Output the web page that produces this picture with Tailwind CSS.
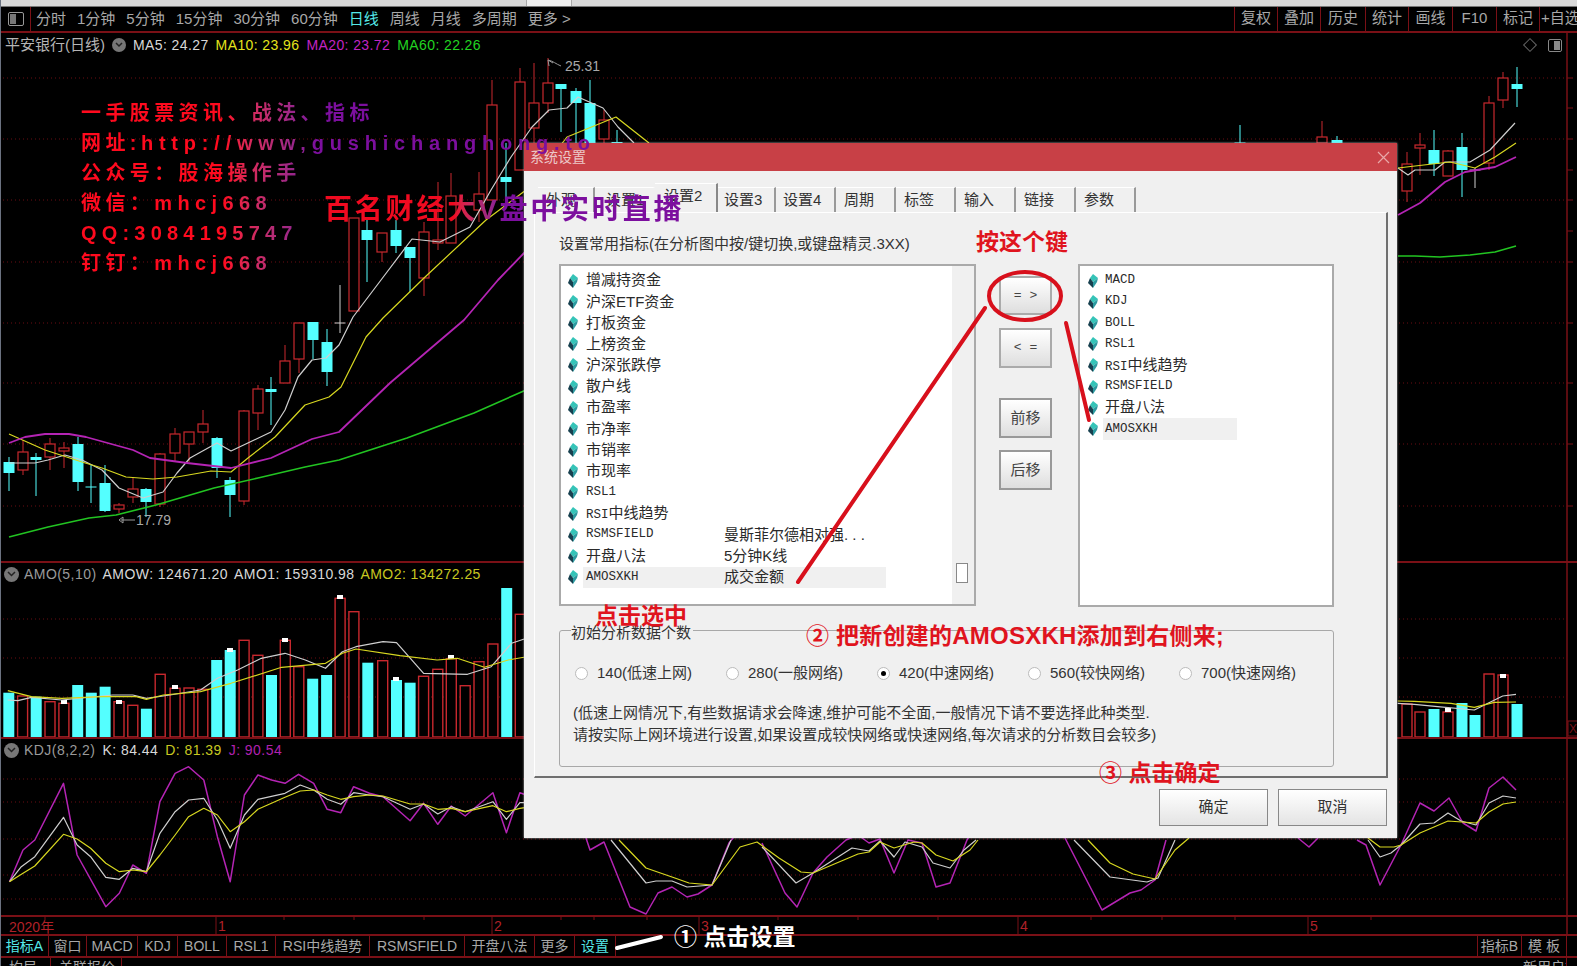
<!DOCTYPE html>
<html>
<head>
    <meta charset="utf-8">
    <script src="https://cdn.jsdelivr.net/npm/@tailwindcss/browser@4"></script>
</head>
<body class="bg-black font-['Liberation_Sans','Noto_Sans_CJK_SC',sans-serif]">
<svg width="0" height="0" class="absolute">
    <symbol id="gem" viewBox="0 0 10 14">
        <polygon points="5,0 10,4 5,8 2,4" fill="#35c4b8"/>
        <polygon points="2,4 5,8 5,14 0,9" fill="#17404f"/>
        <polygon points="5,8 10,4 9,8 5,14" fill="#2c9aa0"/>
    </symbol>
</svg>

<div class="relative w-[1577px] h-[966px] overflow-hidden bg-black text-[#a8a8a8] border-l border-[#6b7280]">
    <!-- Top strip + toolbar -->
    <div class="h-[7px] bg-[#d9d9d9] border-b border-[#777]">
        <div class="ml-[525px] w-[46px] h-[6px] bg-[#efefef] border-x border-[#aaa]"></div>
    </div>
    <div class="h-[26px] flex items-center border-b-2 border-[#7a1016] text-[15px]">
        <div class="w-[30px] h-full flex items-center justify-center border-r border-[#7a1016]">
            <div class="w-[16px] h-[14px] border border-[#999] rounded-[2px] flex justify-start p-[1px]"><div class="w-[6px] h-full bg-[#777]"></div></div>
        </div>
        <div class="flex gap-[11px] pl-[5px]">
            <span>分时</span><span>1分钟</span><span>5分钟</span><span>15分钟</span><span>30分钟</span><span>60分钟</span>
            <span class="text-[#55e8e8]">日线</span><span>周线</span><span>月线</span><span>多周期</span><span>更多 &gt;</span>
        </div>
        <div class="ml-auto flex h-full">
            <span class="w-[43px] text-center border-l border-[#7a1016]">复权</span>
            <span class="w-[43px] text-center border-l border-[#7a1016]">叠加</span>
            <span class="w-[45px] text-center border-l border-[#7a1016]">历史</span>
            <span class="w-[43px] text-center border-l border-[#7a1016]">统计</span>
            <span class="w-[44px] text-center border-l border-[#7a1016]">画线</span>
            <span class="w-[44px] text-center border-l border-[#7a1016]">F10</span>
            <span class="w-[43px] text-center border-l border-[#7a1016]">标记</span>
            <span class="w-[38px] whitespace-nowrap overflow-hidden border-l border-[#7a1016] pl-[1px]">+自选</span>
        </div>
    </div>

    <!-- Price pane -->
    <div class="relative h-[530px] border-b-2 border-[#7a1016]">
        <svg id="pane-price" class="absolute inset-0" width="1577" height="528" viewBox="0 33 1577 528"></svg>
        <div class="relative h-[24px] flex items-center pl-[4px] text-[14px] tracking-[0.4px] gap-[7px]">
            <span class="text-[15px] tracking-normal text-[#b5b5b5]">平安银行(日线)</span>
            <span class="w-[14px] h-[14px] rounded-full bg-[#777] flex items-center justify-center"><svg width="8" height="6" viewBox="0 0 8 6"><path d="M1 1l3 3 3-3" fill="none" stroke="#222" stroke-width="1.5"/></svg></span>
            <span class="text-[#d8d8d8]">MA5: 24.27</span>
            <span class="text-[#e4e41c]">MA10: 23.96</span>
            <span class="text-[#c224c2]">MA20: 23.72</span>
            <span class="text-[#22d422]">MA60: 22.26</span>
            <span class="absolute left-[1524px] top-[7px] w-[10px] h-[10px] border border-[#666] rotate-45"></span>
            <span class="absolute left-[1547px] top-[6px] w-[14px] h-[13px] border border-[#888] rounded-[2px] flex justify-end p-[1px]"><span class="w-[6px] bg-[#888]"></span></span>
        </div>
    </div>

    <!-- AMO pane -->
    <div class="relative h-[176px] border-b-2 border-[#7a1016]">
        <svg id="pane-amo" class="absolute inset-0" width="1577" height="174" viewBox="0 563 1577 174"></svg>
        <div class="relative h-[22px] flex items-center pl-[3px] text-[14px] tracking-[0.45px] gap-[6px]">
            <span class="w-[15px] h-[15px] rounded-full bg-[#777] flex items-center justify-center -mr-[1px]"><svg width="9" height="6" viewBox="0 0 9 6"><path d="M1 1l3.5 3.5L8 1" fill="none" stroke="#222" stroke-width="1.5"/></svg></span>
            <span class="text-[#9a9a9a]">AMO(5,10)</span>
            <span class="text-[#d8d8d8]">AMOW: 124671.20</span>
            <span class="text-[#d8d8d8]">AMO1: 159310.98</span>
            <span class="text-[#c8c820]">AMO2: 134272.25</span>
        </div>
    </div>

    <!-- KDJ pane -->
    <div class="relative h-[178px] border-b-2 border-[#7a1016]">
        <svg id="pane-kdj" class="absolute inset-0" width="1577" height="176" viewBox="0 739 1577 176"></svg>
        <div class="relative h-[22px] flex items-center pl-[3px] text-[14px] tracking-[0.45px] gap-[7px]">
            <span class="w-[15px] h-[15px] rounded-full bg-[#777] flex items-center justify-center -mr-[2px]"><svg width="9" height="6" viewBox="0 0 9 6"><path d="M1 1l3.5 3.5L8 1" fill="none" stroke="#222" stroke-width="1.5"/></svg></span>
            <span class="text-[#9a9a9a]">KDJ(8,2,2)</span>
            <span class="text-[#d8d8d8]">K: 84.44</span>
            <span class="text-[#c8c820]">D: 81.39</span>
            <span class="text-[#b020b0]">J: 90.54</span>
        </div>
    </div>

    <!-- Date axis -->
    <div class="relative h-[19px] border-b-2 border-[#7a1016]">
        <svg id="pane-axis" class="absolute inset-0" width="1577" height="17" viewBox="0 917 1577 17"></svg>
    </div>

    <!-- Indicator tabs -->
    <div class="h-[22px] flex items-center text-[14px] border-b-2 border-[#7a1016]">
        <span class="w-[48px] text-center text-[#55e8e8] border-r border-[#7a1016]">指标A</span>
        <span class="w-[38px] text-center border-r border-[#7a1016]">窗口</span>
        <span class="w-[51px] text-center border-r border-[#7a1016]">MACD</span>
        <span class="w-[40px] text-center border-r border-[#7a1016]">KDJ</span>
        <span class="w-[49px] text-center border-r border-[#7a1016]">BOLL</span>
        <span class="w-[49px] text-center border-r border-[#7a1016]">RSL1</span>
        <span class="w-[94px] text-center border-r border-[#7a1016]">RSI中线趋势</span>
        <span class="w-[95px] text-center border-r border-[#7a1016]">RSMSFIELD</span>
        <span class="w-[70px] text-center border-r border-[#7a1016]">开盘八法</span>
        <span class="w-[40px] text-center border-r border-[#7a1016]">更多</span>
        <span class="w-[41px] text-center text-[#55e8e8] border-r border-[#7a1016]">设置</span>
        <span class="ml-auto w-[44px] text-center border-l border-[#7a1016]">指标B</span>
        <span class="w-[46px] text-center border-x border-[#7a1016] mr-[10px]">模 板</span>
    </div>
    <div class="h-[8px] flex text-[14px] leading-[18px] overflow-hidden">
        <span class="w-[50px] pl-[8px] border-r border-[#7a1016]">均局</span>
        <span class="w-[71px] pl-[8px] border-r border-[#7a1016]">关联报价</span>
        <span class="ml-auto w-[43px] whitespace-nowrap overflow-hidden">新用户福</span>
        <span class="w-[11px] border-l border-[#7a1016]"></span>
    </div>

    <!-- System settings dialog -->
    <div class="absolute left-[523px] top-[143px] w-[873px] h-[695px] bg-[#f0f0f0] text-[#333] text-[15px] shadow-[0_0_2px_#bbb]">
        <div class="h-[28px] bg-[#c84046] flex items-center justify-between pl-[6px] pr-[7px] text-[14px] text-[#ecc8c8]">
            <span>系统设置</span>
            <svg width="13" height="13" viewBox="0 0 13 13"><path d="M1 1l11 11M12 1L1 12" stroke="#e8a8a8" stroke-width="1.2"/></svg>
        </div>
        <div class="h-[41px] pl-[14px] flex items-end">
            <span class="w-[57px] h-[25px] leading-[24px] pl-[8px] border-r-2 border-t border-[#999] border-t-white">外观</span>
            <span class="w-[60px] h-[25px] leading-[24px] pl-[11px] border-r-2 border-t border-[#f0f0f0] border-t-white">设置1</span>
            <span class="w-[63px] h-[29px] leading-[24px] pl-[9px] border-r-2 border-t border-[#888] border-t-white">设置2</span>
            <span class="w-[58px] h-[25px] leading-[24px] pl-[6px] border-r-2 border-t border-[#999] border-t-white">设置3</span>
            <span class="w-[60px] h-[25px] leading-[24px] pl-[7px] border-r-2 border-t border-[#999] border-t-white">设置4</span>
            <span class="w-[60px] h-[25px] leading-[24px] pl-[8px] border-r-2 border-t border-[#999] border-t-white">周期</span>
            <span class="w-[60px] h-[25px] leading-[24px] pl-[8px] border-r-2 border-t border-[#999] border-t-white">标签</span>
            <span class="w-[60px] h-[25px] leading-[24px] pl-[8px] border-r-2 border-t border-[#999] border-t-white">输入</span>
            <span class="w-[60px] h-[25px] leading-[24px] pl-[8px] border-r-2 border-t border-[#999] border-t-white">链接</span>
            <span class="w-[60px] h-[25px] leading-[24px] pl-[8px] border-r-2 border-t border-[#999] border-t-white">参数</span>
        </div>
        <div class="ml-[10px] w-[854px] h-[566px] border-t border-l border-white border-r-2 border-b-2 border-r-[#6f6f6f] border-b-[#6f6f6f] pl-[24px]">
            <div class="h-[51px] pt-[20px] leading-[22px]">设置常用指标(在分析图中按/键切换,或键盘精灵.3XX)</div>
            <div class="flex items-start">
                <!-- Left list -->
                <div class="relative w-[417px] h-[342px] bg-white border-2 border-[#aaa] pt-[4px] pl-[7px] text-[#2a2a2a]">
                    <div class="h-[21.2px] flex items-center"><svg width="10" height="14"><use href="#gem"/></svg><span class="pl-[8px]">增减持资金</span></div>
                    <div class="h-[21.2px] flex items-center"><svg width="10" height="14"><use href="#gem"/></svg><span class="pl-[8px]">沪深ETF资金</span></div>
                    <div class="h-[21.2px] flex items-center"><svg width="10" height="14"><use href="#gem"/></svg><span class="pl-[8px]">打板资金</span></div>
                    <div class="h-[21.2px] flex items-center"><svg width="10" height="14"><use href="#gem"/></svg><span class="pl-[8px]">上榜资金</span></div>
                    <div class="h-[21.2px] flex items-center"><svg width="10" height="14"><use href="#gem"/></svg><span class="pl-[8px]">沪深张跌停</span></div>
                    <div class="h-[21.2px] flex items-center"><svg width="10" height="14"><use href="#gem"/></svg><span class="pl-[8px]">散户线</span></div>
                    <div class="h-[21.2px] flex items-center"><svg width="10" height="14"><use href="#gem"/></svg><span class="pl-[8px]">市盈率</span></div>
                    <div class="h-[21.2px] flex items-center"><svg width="10" height="14"><use href="#gem"/></svg><span class="pl-[8px]">市净率</span></div>
                    <div class="h-[21.2px] flex items-center"><svg width="10" height="14"><use href="#gem"/></svg><span class="pl-[8px]">市销率</span></div>
                    <div class="h-[21.2px] flex items-center"><svg width="10" height="14"><use href="#gem"/></svg><span class="pl-[8px]">市现率</span></div>
                    <div class="h-[21.2px] flex items-center"><svg width="10" height="14"><use href="#gem"/></svg><span class="pl-[8px] font-['Liberation_Mono','Noto_Sans_CJK_SC',monospace] text-[12.5px]">RSL1</span></div>
                    <div class="h-[21.2px] flex items-center"><svg width="10" height="14"><use href="#gem"/></svg><span class="pl-[8px]"><span class="font-['Liberation_Mono',monospace] text-[12.5px]">RSI</span>中线趋势</span></div>
                    <div class="h-[21.2px] flex items-center"><svg width="10" height="14"><use href="#gem"/></svg><span class="w-[146px] pl-[8px] font-['Liberation_Mono',monospace] text-[12.5px]">RSMSFIELD</span><span>曼斯菲尔德相对强. . .</span></div>
                    <div class="h-[21.2px] flex items-center"><svg width="10" height="14"><use href="#gem"/></svg><span class="w-[146px] pl-[8px]">开盘八法</span><span>5分钟K线</span></div>
                    <div class="h-[21.2px] flex items-center"><svg width="10" height="14"><use href="#gem"/></svg><span class="flex ml-[5px] w-[303px] h-full items-center bg-[#f0f0f0]"><span class="w-[141px] pl-[3px] font-['Liberation_Mono',monospace] text-[12.5px]">AMOSXKH</span><span>成交金额</span></span></div>
                    <div class="absolute right-0 top-0 bottom-0 w-[22px] bg-[#f0f0f0]">
                        <div class="absolute left-[4px] top-[297px] w-[12px] h-[20px] bg-white border border-[#888]"></div>
                    </div>
                </div>
                <!-- Move buttons -->
                <div class="w-[53px] ml-[23px] pt-[12px] flex flex-col">
                    <button class="h-[39px] rounded-[2px] border-2 border-[#aaa] bg-linear-to-b from-white to-[#dedede] text-[#444] font-['Liberation_Mono',monospace] text-[13px]">= &gt;</button>
                    <button class="h-[40px] mt-[13px] border-2 border-[#aaa] bg-linear-to-b from-white to-[#dedede] text-[#444] font-['Liberation_Mono',monospace] text-[13px]">&lt; =</button>
                    <button class="h-[40px] mt-[30px] border-2 border-[#999] bg-linear-to-b from-white to-[#dedede] text-[#444]">前移</button>
                    <button class="h-[40px] mt-[12px] border-2 border-[#999] bg-linear-to-b from-white to-[#dedede] text-[#444]">后移</button>
                </div>
                <!-- Right list -->
                <div class="w-[256px] h-[343px] ml-[26px] bg-white border-2 border-[#aaa] pt-[4px] pl-[8px] text-[#2a2a2a]">
                    <div class="h-[21.2px] flex items-center"><svg width="10" height="14"><use href="#gem"/></svg><span class="pl-[7px] font-['Liberation_Mono',monospace] text-[12.5px]">MACD</span></div>
                    <div class="h-[21.2px] flex items-center"><svg width="10" height="14"><use href="#gem"/></svg><span class="pl-[7px] font-['Liberation_Mono',monospace] text-[12.5px]">KDJ</span></div>
                    <div class="h-[21.2px] flex items-center"><svg width="10" height="14"><use href="#gem"/></svg><span class="pl-[7px] font-['Liberation_Mono',monospace] text-[12.5px]">BOLL</span></div>
                    <div class="h-[21.2px] flex items-center"><svg width="10" height="14"><use href="#gem"/></svg><span class="pl-[7px] font-['Liberation_Mono',monospace] text-[12.5px]">RSL1</span></div>
                    <div class="h-[21.2px] flex items-center"><svg width="10" height="14"><use href="#gem"/></svg><span class="pl-[7px]"><span class="font-['Liberation_Mono',monospace] text-[12.5px]">RSI</span>中线趋势</span></div>
                    <div class="h-[21.2px] flex items-center"><svg width="10" height="14"><use href="#gem"/></svg><span class="pl-[7px] font-['Liberation_Mono',monospace] text-[12.5px]">RSMSFIELD</span></div>
                    <div class="h-[21.2px] flex items-center"><svg width="10" height="14"><use href="#gem"/></svg><span class="pl-[7px]">开盘八法</span></div>
                    <div class="h-[21.2px] flex items-center"><svg width="10" height="14"><use href="#gem"/></svg><span class="flex ml-[5px] w-[134px] h-full items-center bg-[#f0f0f0] pl-[2px] font-['Liberation_Mono',monospace] text-[12.5px]">AMOSXKH</span></div>
                </div>
            </div>
            <!-- Data count group -->
            <div class="relative mt-[23px] w-[775px] h-[137px] border border-[#a8a8a8] rounded-[3px] pl-[15px] pt-[31px]">
                <span class="absolute left-[11px] top-[-6px] bg-[#f0f0f0] leading-[16px] pr-[2px]">初始分析数据个数</span>
                <div class="flex">
                    <label class="w-[151px] flex items-center gap-[9px]"><span class="w-[13px] h-[13px] rounded-full bg-white border border-[#bbb]"></span>140(低速上网)</label>
                    <label class="w-[151px] flex items-center gap-[9px]"><span class="w-[13px] h-[13px] rounded-full bg-white border border-[#bbb]"></span>280(一般网络)</label>
                    <label class="w-[151px] flex items-center gap-[9px]"><span class="w-[13px] h-[13px] rounded-full bg-white border border-[#bbb] flex items-center justify-center"><span class="w-[5px] h-[5px] rounded-full bg-black"></span></span>420(中速网络)</label>
                    <label class="w-[151px] flex items-center gap-[9px]"><span class="w-[13px] h-[13px] rounded-full bg-white border border-[#bbb]"></span>560(较快网络)</label>
                    <label class="w-[151px] flex items-center gap-[9px]"><span class="w-[13px] h-[13px] rounded-full bg-white border border-[#bbb]"></span>700(快速网络)</label>
                </div>
                <div class="mt-[17px] -ml-[2px] leading-[22px]">(低速上网情况下,有些数据请求会降速,维护可能不全面,一般情况下请不要选择此种类型.<br>请按实际上网环境进行设置,如果设置成较快网络或快速网络,每次请求的分析数目会较多)</div>
            </div>
        </div>
        <div class="mt-[11px] flex justify-end gap-[10px] pr-[10px]">
            <button class="w-[109px] h-[37px] border border-[#888] bg-linear-to-b from-white to-[#e4e4e4] text-[#333]">确定</button>
            <button class="w-[109px] h-[37px] border border-[#888] bg-linear-to-b from-white to-[#e4e4e4] text-[#333]">取消</button>
        </div>
    </div>

    <!-- Watermarks and tutorial notes, painted over the window -->
    <div class="absolute left-[80px] top-[98px] w-[510px] text-[20px] leading-[30px] tracking-[4.4px] font-bold whitespace-nowrap bg-linear-to-r from-[#ff0a1e] from-[28%] to-[#7c0f9e] to-[46%] bg-clip-text text-transparent">
        <div>一手股票资讯、战法、指标</div>
        <div>网址:<span class="tracking-[5.8px]">http://www,gushichanghong.top</span></div>
        <div>公众号：股海操作手</div>
        <div>微信：<span class="tracking-[5.4px]">mhcj668</span></div>
        <div><span class="tracking-[5.2px]">QQ:3084195747</span></div>
        <div>钉钉：<span class="tracking-[5.4px]">mhcj668</span></div>
    </div>
    <div class="absolute left-[323px] top-[192px] w-[360px] text-[28px] leading-[36px] tracking-[2.8px] font-bold whitespace-nowrap bg-linear-to-r from-[#f00a20] from-[36%] to-[#7c0f9e] to-[50%] bg-clip-text text-transparent">百名财经大V盘中实时直播</div>

    <svg class="absolute inset-0 pointer-events-none" width="1577" height="966" viewBox="0 0 1577 966">
        <ellipse cx="1024" cy="296" rx="36" ry="24" fill="none" stroke="#d8101c" stroke-width="4"/>
        <path d="M984 308L797 582" stroke="#d8101c" stroke-width="4" stroke-linecap="round"/>
        <path d="M1065 323L1088 420" stroke="#d8101c" stroke-width="4" stroke-linecap="round"/>
        <path d="M616 948L660 937" stroke="#fff" stroke-width="4" stroke-linecap="round"/>
    </svg>
    <span class="absolute left-[975px] top-[226px] text-[23px] leading-[32px] font-bold text-[#e0141e]">按这个键</span>
    <span class="absolute left-[594px] top-[600px] text-[23px] leading-[32px] font-bold text-[#e0141e]">点击选中</span>
    <span class="absolute left-[805px] top-[620px] text-[23px] leading-[32px] tracking-[0.25px] font-bold text-[#e0141e] whitespace-nowrap">② 把新创建的<span class="text-[24px]">AMOSXKH</span>添加到右侧来;</span>
    <span class="absolute left-[1098px] top-[757px] text-[23px] leading-[32px] font-bold text-[#e0141e] whitespace-nowrap">③ 点击确定</span>
    <span class="absolute left-[673px] top-[921px] text-[23px] leading-[32px] font-bold text-white whitespace-nowrap">① 点击设置</span>
</div>

<script>
const CYAN = '#54ffff', RED = '#c8282e', WHITE = '#cfcfcf', YELLOW = '#d8d820', PURPLE = '#b424b4', GREEN = '#22c422';
const GRID = '#6a0c12', FRAME = '#7a1016';

function poly(pts, color, w) {
    return `<polyline fill="none" stroke="${color}" stroke-width="${w || 1.2}" stroke-linejoin="round" points="${pts.map(p => p.join(',')).join(' ')}"/>`;
}
function grid(ys) {
    return ys.map(y => `<line x1="2" x2="1566" y1="${y}" y2="${y}" stroke="${GRID}" stroke-dasharray="1 3"/>`).join('');
}
function candle([x, kind, high, top, bot, low]) {
    const color = kind === 'c' ? CYAN : kind === 'w' ? WHITE : RED;
    let s = `<line x1="${x}" x2="${x}" y1="${high}" y2="${top}" stroke="${color}"/><line x1="${x}" x2="${x}" y1="${bot}" y2="${low}" stroke="${color}"/>`;
    if (bot - top < 1) {
        s += `<line x1="${x - 5.5}" x2="${x + 5.5}" y1="${top}" y2="${top}" stroke="${color}"/>`;
    } else if (kind === 'c') {
        s += `<rect x="${x - 5.5}" y="${top}" width="11" height="${bot - top}" fill="${CYAN}"/>`;
    } else {
        s += `<rect x="${x - 5}" y="${top}" width="10" height="${bot - top}" fill="#000" stroke="${RED}" stroke-width="1.2"/>`;
    }
    return s;
}
// converts points read off a scaled crop back to page coordinates
const fromCrop = (pts, ox, oy, sx) => pts.map(([x, y]) => [+(ox + x / sx).toFixed(1), +(oy + y / 3).toFixed(1)]);

// price pane
const candles = [
    [8,'c',457,462,473,491],[22,'r',440,452,470,475],[35,'c',453,457,460,496],[49,'r',438,444,457,470],
    [63,'r',442,448,451,468],[77,'c',437,444,482,491],[90,'c',465,487,487,503],[104,'c',465,483,511,512],
    [118,'r',503,505,509,513],[132,'r',477,489,497,503],[145,'c',488,489,502,517],[159,'r',453,454,504,507],
    [174,'r',428,434,453,462],[188,'r',432,432,444,462],[202,'r',410,424,432,443],[216,'c',437,438,468,478],
    [229,'c',477,480,495,517],[243,'r',410,411,501,505],[257,'r',385,389,413,430],[270,'c',377,389,392,425],
    [284,'r',345,361,383,383],[298,'r',323,323,359,373],[312,'c',322,322,340,359],[326,'c',329,342,372,386],
    [339,'w',285,323,323,333],[353,'r',218,218,311,311],[366,'c',220,230,240,282],[381,'r',233,233,252,262],
    [395,'c',220,230,246,253],[409,'c',247,247,258,292],[423,'r',222,232,278,296],[437,'r',182,240,243,250],
    [450,'r',173,196,243,243],[478,'r',172,194,210,222],[491,'r',80,105,200,200],[505,'c',143,177,182,197],
    [519,'r',68,82,170,170],[533,'r',63,103,128,146],[547,'r',58,83,103,113],[560,'c',84,84,89,132],
    [575,'c',88,91,103,143],[589,'c',80,103,143,143],[603,'r',110,120,139,143],[616,'c',130,142,143,143],
    [1239,'c',125,143,143,143],[1321,'r',121,137,143,143],[1336,'c',136,140,143,143],
    [1406,'r',152,164,191,202],[1419,'r',133,145,148,175],[1433,'c',130,150,164,176],[1447,'r',150,151,176,176],
    [1461,'c',133,147,170,197],[1474,'w',168,170,170,188],[1488,'r',96,103,163,170],[1502,'r',72,78,100,108],[1516,'c',67,84,89,107]
];
const ma5 = [[8,463],[34,463],[47,460],[64,455],[81,460],[101,470],[118,488],[142,498],[162,492],[176,473],[189,458],[216,443],[230,451],[270,432],[284,410],[297,377],[311,360],[325,358],[338,345],[352,317],[380,280],[411,239],[439,242],[469,227],[490,190],[510,157],[531,127],[548,110],[566,108],[577,97],[602,108],[617,127],[633,143]];
const ma10 = [[8,434],[44,450],[81,462],[101,468],[125,477],[152,479],[176,477],[210,471],[230,472],[247,458],[274,437],[304,405],[328,397],[340,387],[365,337],[382,318],[423,278],[485,220],[525,190],[566,137],[615,117],[648,143]];
const ma20 = [[8,443],[24,437],[44,434],[68,434],[85,437],[132,450],[149,458],[186,463],[230,468],[270,458],[311,439],[338,432],[389,383],[463,320],[497,280],[525,251]];
const ma60 = [[8,537],[47,527],[88,518],[115,515],[155,505],[213,488],[257,478],[304,467],[338,460],[406,438],[473,413],[525,390]];
document.getElementById('pane-price').innerHTML =
    grid([78,139,200,262,323,383,444,506]) +
    candles.map(candle).join('') +
    poly(ma5, WHITE) + poly(ma10, YELLOW) + poly(ma20, PURPLE, 1.8) + poly(ma60, GREEN, 1.6) +
    poly([[1397,168],[1407,175],[1414,170],[1434,170],[1444,162],[1469,162],[1489,150],[1514,123]], WHITE) +
    poly([[1397,168],[1414,166],[1449,162],[1474,168],[1494,157],[1515,143]], YELLOW) +
    poly([[1397,215],[1419,203],[1444,182],[1464,172],[1494,167],[1515,157]], PURPLE, 1.8) +
    poly([[1397,256],[1414,256],[1439,257],[1469,255],[1494,252],[1515,246]], GREEN, 1.6) +
    `<path d="M552 63l-5-3 1 6M547 60c5 1 8 4 13 6" fill="none" stroke="#999"/>
     <text x="564" y="71" font-size="14" fill="#a8a8a8">25.31</text>
     <path d="M118 520l4-3v6zM120 520h14" fill="none" stroke="#999"/>
     <text x="135" y="525" font-size="14" fill="#a8a8a8">17.79</text>
     <line x1="1566" x2="1566" y1="33" y2="561" stroke="${FRAME}" stroke-width="1.5"/>` +
    [78,108,139,170,200,231,262,323,383,444,506].map(y => `<line x1="1566" x2="1572" y1="${y}" y2="${y}" stroke="${FRAME}"/>`).join('');

// AMO pane
const barRows = [[23,398,'c'],[64,408,'r'],[104,410,'c'],[145,425,'r'],[186,430,'r'],[227,375,'c'],[267,398,'c'],[308,380,'c'],[349,425,'r'],[390,436,'r'],[430,446,'c'],[471,343,'r'],[515,385,'r'],[556,384,'r'],[597,388,'r'],[638,300,'c'],[678,270,'c'],[719,241,'r'],[760,286,'r'],[800,345,'c'],[841,241,'r'],[881,320,'r'],[922,356,'c'],[963,345,'c'],[1003,115,'r'],[1044,155,'r'],[1085,308,'c'],[1129,302,'r'],[1170,360,'c'],[1210,368,'c'],[1250,349,'r'],[1292,328,'r'],[1332,296,'r'],[1373,377,'r'],[1414,305,'r'],[1455,252,'r'],[1496,84,'c'],[1536,163,'r']];
const bars = barRows.map(([x, top, kind]) => [+(x / 2.958).toFixed(1), +(560 + top / 3).toFixed(1), kind])
    .concat([[1406,704,'r'],[1419,712,'r'],[1433,709,'c'],[1447,712,'r'],[1461,703,'c'],[1474,715,'c'],[1488,674,'r'],[1502,675,'r'],[1516,704,'c']]);
const ticks = [[63,702],[118,702],[174,687],[229,650],[284,640],[339,597],[395,679],[450,657],[1447,710],[1502,676]];
const amoWhite = fromCrop([[20,420],[50,422],[90,412],[180,420],[330,405],[390,405],[430,415],[500,405],[590,390],[640,355],[700,330],[770,295],[840,280],[900,300],[960,325],[1010,275],[1050,260],[1130,245],[1170,248],[1250,340],[1380,343],[1450,320],[1510,250],[1568,230]], 0, 560, 2.958);
const amoYellow = fromCrop([[20,392],[90,410],[180,415],[300,410],[400,410],[430,418],[480,405],[590,395],[680,370],[830,322],[960,310],[1010,280],[1050,267],[1180,287],[1290,300],[1350,295],[1430,322],[1500,300],[1568,288]], 0, 560, 2.958);
document.getElementById('pane-amo').innerHTML =
    grid([619,658,697]) +
    bars.map(([x, top, kind]) => kind === 'c'
        ? `<rect x="${x - 5.5}" y="${top}" width="11" height="${737 - top}" fill="${CYAN}"/>`
        : `<rect x="${x - 5}" y="${top}" width="10" height="${737 - top}" fill="#000" stroke="${RED}" stroke-width="1.4"/>`).join('') +
    ticks.map(([x, y]) => `<rect x="${x - 3}" y="${y - 2}" width="6" height="4" fill="#fff"/>`).join('') +
    poly(amoWhite, WHITE) + poly(amoYellow, YELLOW) +
    poly(fromCrop([[50,130],[100,133],[170,140],[280,150],[330,125],[365,108],[405,103]], 1380, 660, 3), WHITE) +
    poly(fromCrop([[50,123],[100,124],[210,130],[280,142],[340,127],[405,126]], 1380, 660, 3), YELLOW) +
    `<line x1="1566" x2="1566" y1="563" y2="737" stroke="${FRAME}" stroke-width="1.5"/>
     <rect x="1567" y="721" width="10" height="15" fill="none" stroke="${FRAME}"/>
     <text x="1568" y="733" font-size="12" fill="${FRAME}">X</text>`;

// KDJ pane
const kdjLeftJ = fromCrop([[25,425],[65,330],[100,300],[185,130],[225,345],[310,500],[350,460],[390,375],[430,400],[470,185],[515,100],[555,80],[600,120],[640,290],[678,425],[720,165],[760,105],[800,120],[840,130],[880,103],[925,130],[965,208],[1005,218],[1043,140],[1090,160],[1130,170],[1210,242],[1250,190],[1292,253],[1332,198],[1373,228],[1455,158],[1495,278],[1535,158],[1568,170]], 0, 740, 2.958);
const kdjLeftK = fromCrop([[25,425],[60,380],[100,350],[185,232],[225,315],[265,350],[310,412],[350,418],[390,385],[430,395],[470,280],[515,215],[555,180],[600,175],[640,240],[678,325],[720,225],[760,178],[840,160],[885,135],[925,150],[965,178],[1005,193],[1043,158],[1090,165],[1130,170],[1210,208],[1250,192],[1292,222],[1332,200],[1373,215],[1455,185],[1495,238],[1535,188],[1568,188]], 0, 740, 2.958);
const kdjLeftD = fromCrop([[25,425],[65,400],[100,378],[185,283],[225,297],[265,325],[310,370],[350,395],[390,390],[430,395],[470,345],[515,285],[555,230],[600,205],[640,225],[678,275],[720,245],[760,208],[840,172],[885,153],[925,150],[965,165],[1005,178],[1043,170],[1090,165],[1130,168],[1210,192],[1250,192],[1292,208],[1332,205],[1373,215],[1455,197],[1495,215],[1535,205],[1568,200]], 0, 740, 2.958);
const kdjSegments = [
    [[[585,838],[589,850],[603,842],[629,907],[645,914],[657,893],[671,887],[686,897],[697,894],[711,885],[728,843],[736,833]], PURPLE],
    [[[761,843],[784,893],[796,907],[812,873],[826,857],[845,840],[857,835],[868,843],[879,839],[893,873],[907,840],[921,843],[935,887],[949,883],[966,840],[969,835]], PURPLE],
    [[[1064,838],[1101,910],[1129,893],[1140,890],[1154,880],[1165,840]], PURPLE],
    [[[1297,838],[1308,847],[1317,838]], PURPLE],
    [[[1356,840],[1365,845],[1379,885],[1400,845],[1419,803],[1433,811],[1448,798],[1462,823],[1475,831],[1488,788],[1502,777],[1515,790]], PURPLE],
    [[[610,840],[645,883],[655,881],[671,881],[686,887],[711,885],[730,840]], WHITE],
    [[[761,847],[795,883],[812,873],[851,848],[868,851],[879,841],[893,857],[904,842],[921,847],[932,863],[949,868],[963,850],[975,840]], WHITE],
    [[[1073,840],[1109,877],[1146,882],[1157,878],[1174,840]], WHITE],
    [[[1367,840],[1379,857],[1390,853],[1400,845],[1419,824],[1433,823],[1447,813],[1460,821],[1475,825],[1488,803],[1502,796],[1515,798]], WHITE],
    [[[618,840],[645,868],[671,877],[688,883],[711,885],[739,847],[756,842],[778,858],[800,872],[812,873],[857,854],[868,852],[879,842],[893,848],[913,842],[921,843],[935,855],[952,861],[969,850],[977,840]], YELLOW],
    [[[1087,840],[1109,863],[1132,874],[1154,879],[1174,850],[1188,838]], YELLOW],
    [[[1367,838],[1379,847],[1393,847],[1400,845],[1419,833],[1447,821],[1475,823],[1488,812],[1502,804],[1515,802]], YELLOW]
];
document.getElementById('pane-kdj').innerHTML =
    grid([779,802,839,875,899]) +
    poly(kdjLeftJ, PURPLE, 1.5) + poly(kdjLeftK, WHITE) + poly(kdjLeftD, YELLOW) +
    kdjSegments.map(([pts, color]) => poly(pts, color, color === PURPLE ? 1.5 : 1.2)).join('') +
    `<line x1="1566" x2="1566" y1="739" y2="915" stroke="${FRAME}" stroke-width="1.5"/>`;

// date axis
const majors = [[215,'1'],[491,'2'],[698,'3'],[1017,'4'],[1307,'5']];
const minors = [44,283,353,423,560,593,646,777,857,937,1090,1161,1234,1370];
document.getElementById('pane-axis').innerHTML =
    `<text x="8" y="932" font-size="14" fill="#b02028">2020年</text>` +
    majors.map(([x, label]) => `<line x1="${x}" x2="${x}" y1="917" y2="934" stroke="${FRAME}"/><text x="${x + 2}" y="931" font-size="14" fill="#b02028">${label}</text>`).join('') +
    minors.map(x => `<line x1="${x}" x2="${x}" y1="917" y2="920" stroke="${FRAME}"/>`).join('') +
    `<line x1="1566" x2="1566" y1="917" y2="934" stroke="${FRAME}" stroke-width="1.5"/>`;
</script>
</body>
</html>
